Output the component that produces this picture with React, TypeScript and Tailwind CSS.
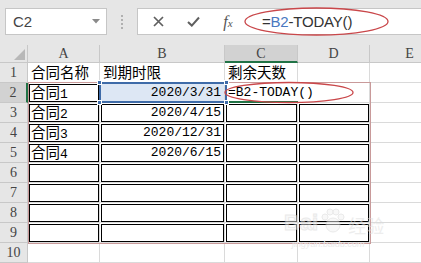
import React from "react";

const COLS = [
  { key: "A", w: 72 },
  { key: "B", w: 125 },
  { key: "C", w: 73 },
  { key: "D", w: 72 },
  { key: "E", w: 80 },
];

type CellDef = { t?: React.ReactNode; right?: boolean };

const CJK = ({ children }: { children: React.ReactNode }) => (
  <span className="text-[14.5px] [font-family:'Noto_Sans_CJK_SC',sans-serif]">{children}</span>
);

const data: Record<number, CellDef[]> = {
  1: [{ t: <CJK>合同名称</CJK> }, { t: <CJK>到期时限</CJK> }, { t: <CJK>剩余天数</CJK> }, {}, {}],
  2: [{ t: <><CJK>合同</CJK>1</> }, { t: "2020/3/31", right: true }, { t: "=B2-TODAY()" }, {}, {}],
  3: [{ t: <><CJK>合同</CJK>2</> }, { t: "2020/4/15", right: true }, {}, {}, {}],
  4: [{ t: <><CJK>合同</CJK>3</> }, { t: "2020/12/31", right: true }, {}, {}, {}],
  5: [{ t: <><CJK>合同</CJK>4</> }, { t: "2020/6/15", right: true }, {}, {}, {}],
};

function hasBox(r: number, c: number) {
  if (c > 3) return false;
  if (r >= 3 && r <= 9) return true;
  if (r === 2 && c === 0) return true;
  return false;
}

export default function App() {
  const rows = Array.from({ length: 10 }, (_, i) => i + 1);
  return (
    <div className="w-[421px] h-[263px] overflow-hidden bg-white relative [font-family:'Liberation_Sans',sans-serif]">
      {/* Toolbar */}
      <div className="h-[45px] bg-[#e6e6e6] flex items-start pt-[8px] pl-[5px]">
        <div className="w-[102px] h-[27px] bg-white border border-[#c6c6c6] flex items-center justify-between pl-[7px] pr-[6px]">
          <span className="text-[15px] text-[#444] leading-none">C2</span>
          <svg width="8" height="5" viewBox="0 0 8 5"><path d="M0 0 L8 0 L4 4.5 Z" fill="#8a8a8a" /></svg>
        </div>
        <div className="w-[30px] h-[27px] flex flex-col items-center justify-center gap-[2px]">
          <span className="w-[2px] h-[2px] bg-[#b0b0b0]" />
          <span className="w-[2px] h-[2px] bg-[#b0b0b0]" />
          <span className="w-[2px] h-[2px] bg-[#b0b0b0]" />
          <span className="w-[2px] h-[2px] bg-[#b0b0b0]" />
        </div>
        <div className="flex-1 h-[27px] bg-white border border-[#c6c6c6] border-r-0 flex items-center">
          <div className="w-[40px] flex justify-center">
            <svg width="11" height="11" viewBox="0 0 11 11"><path d="M1 1 L10 10 M10 1 L1 10" stroke="#5f5f5f" strokeWidth="1.7" /></svg>
          </div>
          <div className="w-[30px] flex justify-center">
            <svg width="13" height="11" viewBox="0 0 13 11"><path d="M1 6 L4.8 9.6 L12 1.5" stroke="#5f5f5f" strokeWidth="2" fill="none" /></svg>
          </div>
          <div className="w-[40px] flex justify-center">
            <span className="text-[16px] italic text-[#555] leading-none [font-family:'Liberation_Serif',serif]">f<span className="text-[11px]">x</span></span>
          </div>
          <div className="pl-[14px] text-[15px] leading-none text-[#333] tracking-[-0.2px]">
            =<span className="text-[#4a78c0]">B2</span>-TODAY()
          </div>
        </div>
      </div>

      {/* Sheet */}
      <div className="relative">
        <div className="grid grid-cols-[28px_72px_125px_73px_72px_80px] grid-rows-[18px_repeat(10,20px)] text-[13px] text-black [font-family:'Liberation_Mono',monospace]">
          {/* header row */}
          <div className="bg-[#e6e6e6] border-r border-b border-[#c8c8c8] relative">
            <svg className="absolute right-[2px] bottom-[2px]" width="11" height="11" viewBox="0 0 11 11"><path d="M11 0 L11 11 L0 11 Z" fill="#b8b8b8" /></svg>
          </div>
          {COLS.map((c) => (
            <div
              key={c.key}
              className={
                c.key === "C"
                  ? "bg-[#d2d2d2] border-r border-[#c8c8c8] border-b-2 border-b-[#217346] flex items-center justify-center text-[14px] text-[#444] [font-family:'Liberation_Serif',serif]"
                  : "bg-[#e6e6e6] border-r border-b border-[#c8c8c8] flex items-center justify-center text-[14px] text-[#444] [font-family:'Liberation_Serif',serif]"
              }
            >
              {c.key}
            </div>
          ))}
          {rows.map((r) => (
            <React.Fragment key={r}>
              <div
                className={
                  r === 2
                    ? "bg-[#d2d2d2] border-b border-[#c8c8c8] border-r-2 border-r-[#217346] flex items-center justify-center text-[14px] text-[#444] [font-family:'Liberation_Serif',serif]"
                    : "bg-[#e6e6e6] border-r border-b border-[#c8c8c8] flex items-center justify-center text-[14px] text-[#444] [font-family:'Liberation_Serif',serif]"
                }
              >
                {r}
              </div>
              {COLS.map((c, ci) => {
                const def = (data[r] && data[r][ci]) || {};
                const isB2 = r === 2 && ci === 1;
                const isC2 = r === 2 && ci === 2;
                return (
                  <div
                    key={c.key}
                    className={
                      "relative border-b border-[#dadada] flex items-center whitespace-nowrap " +
                      (isC2 ? "" : "border-r ") +
                      (isB2 ? "bg-[#dde7f4] " : "") +
                      (def.right ? "justify-end pr-[3px]" : "pl-[3px]")
                    }
                  >
                    {hasBox(r, ci) && <div className="absolute left-px top-px right-0 bottom-0 border border-black" />}
                    {def.t !== undefined && <span className="relative z-10 leading-none">{def.t}</span>}
                  </div>
                );
              })}
            </React.Fragment>
          ))}
        </div>

        {/* Pink outline around A2:D9 */}
        <div className="absolute left-[28px] top-[37px] w-[343px] h-[162px] border border-[#c99a9a] pointer-events-none" />

        {/* C2 active bottom */}
        <div className="absolute left-[226px] top-[56px] w-[72px] h-[2px] bg-[#217346]" />

        {/* B2 reference selection */}
        <div className="absolute left-[99px] top-[37px] w-[128px] h-[21px] border-2 border-[#3e6ba8]" />
        <div className="absolute left-[97px] top-[35px] w-[5px] h-[5px] bg-[#3e6ba8] border border-white" />
        <div className="absolute left-[224px] top-[35px] w-[5px] h-[5px] bg-[#3e6ba8] border border-white" />
        <div className="absolute left-[97px] top-[55px] w-[5px] h-[5px] bg-[#3e6ba8] border border-white" />
        <div className="absolute left-[224px] top-[55px] w-[5px] h-[5px] bg-[#3e6ba8] border border-white" />

        {/* Watermark */}
        <div className="absolute left-[284px] top-[163px] flex items-end opacity-50">
          <span className="text-[22px] font-bold text-[#f2f2f2] leading-none [font-family:'Liberation_Sans',sans-serif] [-webkit-text-stroke:1px_#d6d6d6]">Bai</span>
          <svg width="28" height="26" viewBox="0 0 28 26" className="mx-[1px]">
            <circle cx="14" cy="17" r="7" fill="#f2f2f2" stroke="#d6d6d6" />
            <circle cx="6" cy="9" r="3" fill="#f2f2f2" stroke="#d6d6d6" />
            <circle cx="11" cy="4" r="3" fill="#f2f2f2" stroke="#d6d6d6" />
            <circle cx="17" cy="4" r="3" fill="#f2f2f2" stroke="#d6d6d6" />
            <circle cx="22" cy="9" r="3" fill="#f2f2f2" stroke="#d6d6d6" />
          </svg>
          <span className="text-[18px] text-[#dcdcdc] leading-none [font-family:'Noto_Sans_CJK_SC',sans-serif]">经验</span>
        </div>
        <div className="absolute left-[292px] top-[193px] text-[9px] italic text-[#ebebeb] [font-family:'Liberation_Sans',sans-serif]">jingyan.baidu.com</div>
      </div>

      {/* Ellipses */}
      <svg className="absolute left-0 top-0 pointer-events-none" width="421" height="263">
        <ellipse cx="316.5" cy="21.5" rx="71.5" ry="13.5" fill="none" stroke="#c9474a" strokeWidth="1.3" />
        <ellipse cx="289" cy="92.5" rx="64" ry="10" fill="none" stroke="#c9474a" strokeWidth="1.3" />
      </svg>
    </div>
  );
}
